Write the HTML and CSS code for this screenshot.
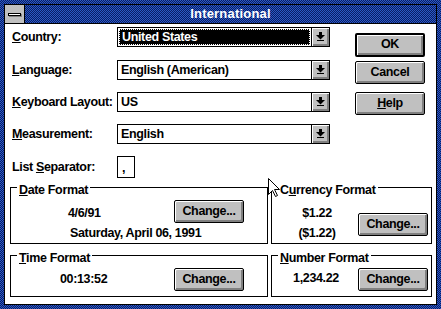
FILE: index.html
```html
<!DOCTYPE html>
<html>
<head>
<meta charset="utf-8">
<link rel="stylesheet" href="styles.css">
</head>
<body>
<div class="window">
  <div class="frame">
    <div class="titlebar">
      <div class="sysmenu"><div class="sysbar"></div></div>
      <div class="title">International</div>
    </div>
    <div class="client">
      <div class="top">
        <div class="form">
          <div class="row first">
            <div class="label"><u>C</u>ountry:</div>
            <div class="combo">
              <div class="combo-text"><span class="sel">United States</span></div>
              <div class="combo-btn"><svg width="9" height="10" viewBox="0 0 9 10"><rect x="3" y="0" width="3" height="3" fill="#000"/><polygon points="0,3 9,3 4.5,7.5" fill="#000"/><rect x="1" y="8" width="7" height="1" fill="#000"/></svg></div>
            </div>
          </div>
          <div class="row">
            <div class="label"><u>L</u>anguage:</div>
            <div class="combo">
              <div class="combo-text">English (American)</div>
              <div class="combo-btn"><svg width="9" height="10" viewBox="0 0 9 10"><rect x="3" y="0" width="3" height="3" fill="#000"/><polygon points="0,3 9,3 4.5,7.5" fill="#000"/><rect x="1" y="8" width="7" height="1" fill="#000"/></svg></div>
            </div>
          </div>
          <div class="row">
            <div class="label"><u>K</u>eyboard Layout:</div>
            <div class="combo">
              <div class="combo-text">US</div>
              <div class="combo-btn"><svg width="9" height="10" viewBox="0 0 9 10"><rect x="3" y="0" width="3" height="3" fill="#000"/><polygon points="0,3 9,3 4.5,7.5" fill="#000"/><rect x="1" y="8" width="7" height="1" fill="#000"/></svg></div>
            </div>
          </div>
          <div class="row">
            <div class="label"><u>M</u>easurement:</div>
            <div class="combo">
              <div class="combo-text">English</div>
              <div class="combo-btn"><svg width="9" height="10" viewBox="0 0 9 10"><rect x="3" y="0" width="3" height="3" fill="#000"/><polygon points="0,3 9,3 4.5,7.5" fill="#000"/><rect x="1" y="8" width="7" height="1" fill="#000"/></svg></div>
            </div>
          </div>
          <div class="row sep-row">
            <div class="label">List <u>S</u>eparator:</div>
            <div class="sepbox">,</div>
          </div>
        </div>
        <div class="buttons">
          <div class="btn default">OK</div>
          <div class="btn">Cancel</div>
          <div class="btn help"><u>H</u>elp</div>
        </div>
      </div>
      <div class="groups">
        <div class="group date">
          <div class="gtitle"><u>D</u>ate Format</div>
          <div class="date-line1">
            <div class="date-short">4/6/91</div>
            <div class="btn">Change...</div>
          </div>
          <div class="date-long">Saturday, April 06, 1991</div>
        </div>
        <div class="group currency">
          <div class="gtitle">C<u>u</u>rrency Format</div>
          <div class="cur-body">
            <div class="cur-vals">
              <div>$1.22</div>
              <div class="neg">($1.22)</div>
            </div>
            <div class="btn cur-btn">Change...</div>
          </div>
        </div>
        <div class="group time">
          <div class="gtitle"><u>T</u>ime Format</div>
          <div class="time-line">
            <div class="time-val">00:13:52</div>
            <div class="btn">Change...</div>
          </div>
        </div>
        <div class="group number">
          <div class="gtitle"><u>N</u>umber Format</div>
          <div class="num-line">
            <div class="num-val">1,234.22</div>
            <div class="btn">Change...</div>
          </div>
        </div>
      </div>
    </div>
  </div>
  <svg class="cursor" width="13" height="20" viewBox="0 0 13 20"><path d="M0.5 0.5 L0.5 16.5 L4.5 12.5 L7.5 18.5 L9.5 17.5 L6.5 11.5 L11.5 11.5 Z" fill="#fff" stroke="#000" stroke-width="1"/></svg>
</div>
</body>
</html>
```
FILE: styles.css
```css
html, body {
  margin: 0;
  padding: 0;
  background: #fff;
}
body {
  font-family: "Liberation Sans", Arial, sans-serif;
  font-weight: bold;
  font-size: 12.5px;
  letter-spacing: -0.35px;
  line-height: 16px;
  color: #000;
}
.window {
  position: relative;
  width: 441px;
  height: 309px;
  box-sizing: border-box;
  padding: 4px;
  background: repeating-conic-gradient(#0a1c66 0 25%, #2a5ac4 0 50%) 0 0 / 2px 2px;
}
.frame {
  width: 100%;
  height: 100%;
  box-sizing: border-box;
  border: 1px solid #000;
  background: #fff;
  display: flex;
  flex-direction: column;
}
.titlebar {
  height: 18px;
  border-bottom: 1px solid #000;
  display: flex;
  background: repeating-conic-gradient(#0a1c66 0 25%, #2a5ac4 0 50%) 0 0 / 2px 2px;
}
.sysmenu {
  width: 19px;
  border-right: 1px solid #000;
  background: #c0c0c0;
  display: flex;
  align-items: center;
  justify-content: center;
}
.sysbar {
  width: 11px;
  height: 1px;
  border: 1px solid #000;
  background: #fff;
  box-shadow: 1px 1px 0 #808080;
}
.title {
  flex: 1;
  text-align: center;
  color: #fff;
  font-size: 13px;
  line-height: 18px;
  letter-spacing: 0.2px;
}
.client {
  flex: 1;
  padding-top: 3px;
}
.top {
  display: flex;
}
.form {
  padding-left: 7px;
  display: flex;
  flex-direction: column;
  gap: 12px;
}
.row {
  display: flex;
  align-items: center;
  height: 20px;
}
.row.first {
  margin-bottom: 1px;
}
.row.sep-row {
  height: 22px;
}
.label {
  width: 105px;
  white-space: nowrap;
}
.combo {
  width: 213px;
  height: 20px;
  box-sizing: border-box;
  border: 1px solid #000;
  display: flex;
  background: #fff;
}
.combo-text {
  flex: 1;
  padding-left: 3px;
  line-height: 18px;
  display: flex;
}
.combo-text .sel {
  flex: 1;
  margin: 1px 1px 1px -2px;
  padding-left: 2px;
  background: #000;
  color: #fff;
  line-height: 14px;
  border: 1px dotted #fff;
}
.combo-btn {
  width: 17px;
  border-left: 1px solid #000;
  background: #c0c0c0;
  box-shadow: inset 1px 1px 0 #fff, inset -1px -1px 0 #808080, inset -2px -2px 0 #808080;
  display: flex;
  align-items: center;
  justify-content: center;
}
.combo-btn svg {
  display: block;
  margin: -1px 0 0 -1px;
}
.sepbox {
  width: 18px;
  height: 22px;
  box-sizing: border-box;
  border: 1px solid #000;
  padding: 2px 0 0 4px;
  line-height: 18px;
}
.buttons {
  margin-left: 25px;
  margin-top: 6px;
  display: flex;
  flex-direction: column;
  gap: 4px;
}
.btn {
  width: 70px;
  height: 23px;
  box-sizing: border-box;
  border: 1px solid #000;
  border-radius: 2px;
  background: #c0c0c0;
  box-shadow: inset 1px 1px 0 #fff, inset -1px -1px 0 #808080, inset -2px -2px 0 #808080;
  text-align: center;
  line-height: 20px;
}
.btn.default {
  border-width: 2px;
  line-height: 18px;
  height: 24px;
}
.btn.help {
  margin-top: 4px;
}
.groups {
  margin: 9px 0 0 5px;
  display: grid;
  grid-template-columns: 258px 161px;
  grid-template-rows: 57px 42px;
  column-gap: 3px;
  row-gap: 11px;
}
.group {
  border: 1px solid #000;
}
.gtitle {
  margin: -6px 0 0 6px;
  padding: 0 2px;
  width: fit-content;
  background: #fff;
}
.date-line1 {
  display: flex;
  margin-top: 2px;
}
.date-short {
  margin-left: 57px;
  width: 106px;
  padding-top: 5px;
}
.date-long {
  margin: 2px 0 0 59px;
}
.cur-body {
  display: flex;
}
.cur-vals {
  width: 82px;
  padding: 7px 0 0 4px;
  text-align: center;
}
.cur-vals .neg {
  margin-top: 4px;
}
.cur-btn {
  margin-top: 15px;
}
.time-line {
  display: flex;
  margin-top: 2px;
}
.time-val {
  margin-left: 49px;
  width: 114px;
  padding-top: 3px;
}
.num-line {
  display: flex;
  margin-top: 2px;
}
.num-val {
  width: 86px;
  padding-left: 2px;
  box-sizing: border-box;
  text-align: center;
  padding-top: 2px;
}
.cursor {
  position: absolute;
  left: 268px;
  top: 178px;
}
```
